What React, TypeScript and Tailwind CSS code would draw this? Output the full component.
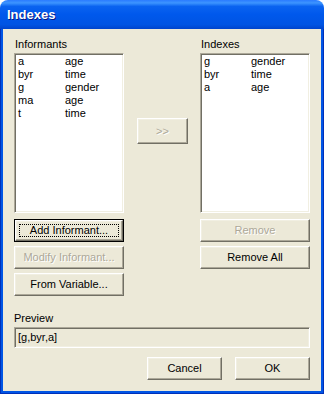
const font = "font-['Liberation_Sans',Arial,sans-serif]";

const raised =
  "flex items-center justify-center bg-[#ECE9D8] border border-t-white border-l-white border-r-[#716F64] border-b-[#716F64] shadow-[inset_-1px_-1px_0_#ACA899,inset_1px_1px_0_#F1EFE2]";
const sunken =
  "border border-t-[#ACA899] border-l-[#ACA899] border-r-white border-b-white shadow-[inset_1px_1px_0_#716F64,inset_-1px_-1px_0_#F1EFE2]";
const disabledText = "text-[#ACA899] [text-shadow:1px_1px_0_#ffffff]";

const informants = [
  ["a", "age"],
  ["byr", "time"],
  ["g", "gender"],
  ["ma", "age"],
  ["t", "time"],
];

const indexes = [
  ["g", "gender"],
  ["byr", "time"],
  ["a", "age"],
];

function ListBox({ rows }: { rows: string[][] }) {
  return (
    <div className={`${sunken} bg-white h-[160px] pt-[1px] pl-[3px]`}>
      {rows.map(([k, v]) => (
        <div key={k} className="grid grid-cols-[47px_1fr] h-[13px] leading-[13px]">
          <span>{k}</span>
          <span>{v}</span>
        </div>
      ))}
    </div>
  );
}

function Button({
  label,
  disabled,
  primary,
  className = "",
}: {
  label: string;
  disabled?: boolean;
  primary?: boolean;
  className?: string;
}) {
  if (primary) {
    return (
      <div className={`border border-black ${className}`}>
        <div className={`${raised} h-full relative`}>
          <div className="absolute inset-[3px] border border-dotted border-black" />
          <span>{label}</span>
        </div>
      </div>
    );
  }
  return (
    <div className={`${raised} ${className}`}>
      <span className={disabled ? disabledText : ""}>{label}</span>
    </div>
  );
}

export default function App() {
  return (
    <div className={`w-[324px] h-[394px] flex flex-col ${font} text-[11px] text-black`}>
      {/* title bar */}
      <div className="h-[29px] shrink-0 rounded-t-[8px] bg-[linear-gradient(to_bottom,#2A7BFF_0%,#3D95FF_10%,#0A63F0_22%,#0058EC_50%,#0054E3_85%,#0044CC_100%)] flex items-center pl-[7px]">
        <span className="text-white font-bold text-[13px] [text-shadow:1px_1px_0_#0A1883]">Indexes</span>
      </div>

      {/* frame */}
      <div className="flex-1 bg-[#0055E5] border-l border-r border-b border-[#0030B8] px-[2px] pb-[2px] flex flex-col">
        <div className="flex-1 bg-[#ECE9D8] px-[11px] pt-[9px] flex flex-col">
          <div className="flex">
            <div className="w-[110px] flex flex-col">
              <div className="h-[13px] leading-[13px] mb-[2px] pl-[1px]">Informants</div>
              <ListBox rows={informants} />
              <Button label="Add Informant..." primary className="h-[23px] mt-[6px]" />
              <Button label="Modify Informant..." disabled className="h-[23px] mt-[4px]" />
              <Button label="From Variable..." className="h-[23px] mt-[4px]" />
            </div>

            <div className="w-[51px] ml-[13px] pt-[80px]">
              <Button label=">>" disabled className="h-[26px]" />
            </div>

            <div className="w-[110px] ml-[12px] flex flex-col">
              <div className="h-[13px] leading-[13px] mb-[2px] pl-[1px]">Indexes</div>
              <ListBox rows={indexes} />
              <Button label="Remove" disabled className="h-[23px] mt-[6px]" />
              <Button label="Remove All" className="h-[23px] mt-[4px]" />
            </div>
          </div>

          <div className="h-[13px] leading-[13px] mt-[16px] mb-[2px]">Preview</div>
          <div className={`${sunken} h-[21px] flex items-center pl-[3px]`}>[g,byr,a]</div>

          <div className="flex justify-end gap-[13px] mt-[9px]">
            <Button label="Cancel" className="w-[75px] h-[23px]" />
            <Button label="OK" className="w-[75px] h-[23px]" />
          </div>
        </div>
      </div>
    </div>
  );
}
